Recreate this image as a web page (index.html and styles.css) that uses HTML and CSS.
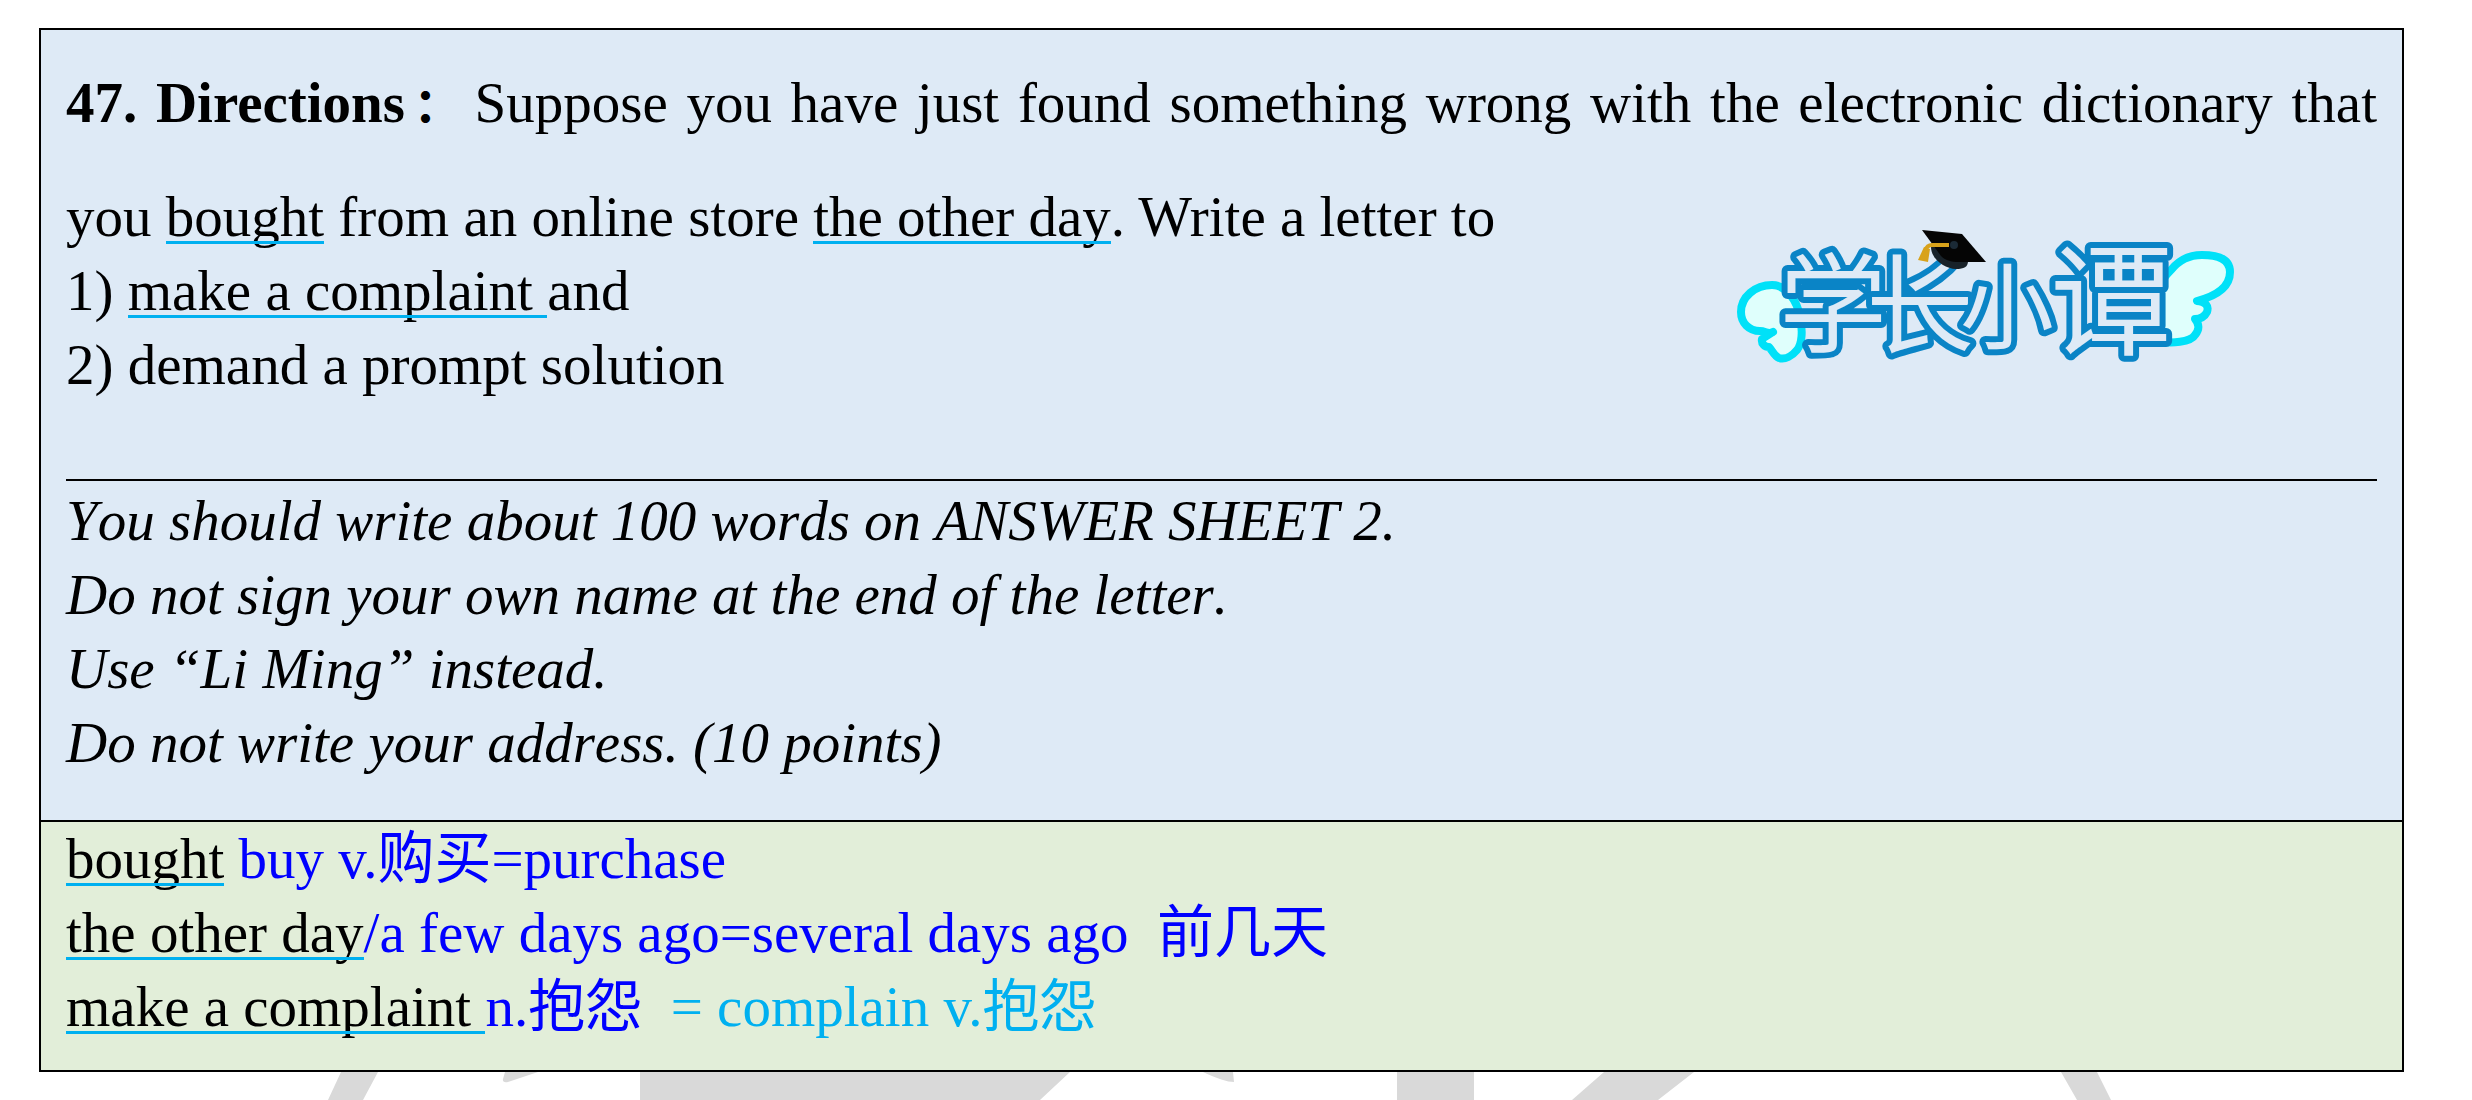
FILE: index.html
```html
<!DOCTYPE html>
<html lang="en">
<head>
<meta charset="utf-8">
<title>47. Directions</title>
<link rel="stylesheet" href="styles.css">
</head>
<body>
<main class="sheet">
  <section class="task">
    <p class="prompt"><strong>47. Directions<span class="colon" lang="zh-CN">：</span></strong> Suppose you have just found something wrong with the electronic dictionary that you <span class="mark">bought</span> from an online store <span class="mark">the other day</span>. Write a letter to</p>
    <p>1) <span class="mark">make a complaint </span>and</p>
    <p>2) demand a prompt solution</p>
    <div class="rules">
      <p>You should write about 100 words on ANSWER SHEET 2.</p>
      <p>Do not sign your own name at the end of the letter.</p>
      <p>Use “Li Ming” instead.</p>
      <p>Do not write your address. (10 points)</p>
    </div>
    <svg class="logo" viewBox="1736 224 502 146" role="img" aria-label="学长小谭">
      <path class="wing" d="M1774 330c-5 3-7-1-13-1-11 0-19-8-19-19 0-15 14-27 31-27 14 0 25 15 28 32 3 14 2 27-3 33-5 6-12 10-18 8-5-2-7-8-10-11-4 0-8-3-7-8z"/>
      <path class="wing" d="M2172 268c8-10 19-15 31-15 17 0 28 5 28 17 0 15-14 24-33 29 9 1 12 5 10 11-2 4-6 7-12 7 5 6 4 11 0 16-4 7-24 9-37 6-9-3-12-12-10-25 3-18 10-33 23-46z"/>
      <g class="name" lang="zh-CN">
        <text x="1780" y="342" font-size="108">学</text>
        <text x="1867" y="343" font-size="108">长</text>
        <text x="1961" y="340" font-size="94">小</text>
        <text x="2051" y="343" font-size="122">谭</text>
      </g>
      <path d="M1932 245c0 12 14 22 25 22 8 0 12-2 12-8l-2-10-30-12z" fill="#182229"/>
      <path d="M1923 228l40 4 24 28h-27c-8 0-14-2-18-6z" fill="#050505"/>
      <circle cx="1955" cy="243" r="4" fill="#1b2a36"/>
      <path d="M1950 243h-17c-4 0-6 3-7 6" fill="none" stroke="#d8a21b" stroke-width="4"/>
      <path d="M1925 245l6 2-2 13-10-2z" fill="#d8a21b"/>
    </svg>
  </section>
  <section class="notes">
    <p><span class="mark">bought</span> <span class="gloss">buy v.购买=purchase</span></p>
    <p><span class="mark">the other day</span><span class="gloss">/a few days ago=several days ago&nbsp; 前几天</span></p>
    <p><span class="mark">make a complaint </span><span class="gloss">n.抱怨&nbsp; </span><span class="synonym">= complain v.抱怨</span></p>
  </section>
</main>
<svg class="watermark" viewBox="0 1072 2472 28" aria-hidden="true">
  <path d="M341 1072h37l-15 28h-35zM505 1072h33l-30 10q-6 1-5-3zM640 1072h430l-30 28H640zM1203 1072h30l1 10q-10 0-31-10zM1397 1072h77v28h-77zM1604 1072h90l-36 28h-86zM2061 1072h36l14 28h-34z"/>
</svg>
</body>
</html>
```

FILE: styles.css
```css
* {
  box-sizing: border-box;
}

body {
  margin: 0;
  padding: 28px 68px 0 39px;
  background: #fff;
  color: #000;
  font-family: "Liberation Serif", "Noto Sans CJK SC", serif;
  font-size: 57px;
  line-height: 74px;
  overflow-x: hidden;
}

p {
  margin: 0;
}

.sheet {
  border: 2px solid #000;
}

.task {
  position: relative;
  padding: 16px 25px 40px;
  background: #deeaf6;
}

.prompt {
  margin-bottom: -20px;
  line-height: 114px;
  text-align: justify;
}

.colon {
  margin-right: -10px;
  padding-left: 4px;
  font-family: "Noto Sans CJK SC", sans-serif;
  font-size: 48px;
  line-height: 0;
}

/* Highlighted phrases: the rule is drawn over the descenders */
.mark {
  position: relative;
  white-space: pre;
}

.mark::after {
  content: "";
  position: absolute;
  left: 0;
  right: 0;
  bottom: 4px;
  height: 3px;
  background: #00b0f0;
}

.rules {
  margin-top: 77px;
  border-top: 2px solid #000;
  padding-top: 3px;
  font-style: italic;
  font-kerning: none;
}

.logo {
  position: absolute;
  top: 196px;
  right: 165px;
  width: 502px;
  height: 146px;
  overflow: visible;
}

.wing {
  fill: #dffffc;
  stroke: #00e1f8;
  stroke-width: 8;
  stroke-linejoin: round;
}

/* Hollow lettering: blue outline painted behind a pale fill */
.name {
  font-family: "Noto Sans CJK SC", sans-serif;
  font-weight: 400;
  fill: #deeaf6;
  stroke: #0a84c6;
  stroke-width: 12;
  stroke-linejoin: round;
  paint-order: stroke;
}

.notes {
  border-top: 2px solid #000;
  padding: 0 25px 26px;
  background: #e2eed9;
}

.gloss {
  color: #00f;
}

.synonym {
  color: #00b0f0;
}

.watermark {
  display: block;
  width: 100vw;
  margin-left: -39px;
  fill: #d9d9d9;
}
```
